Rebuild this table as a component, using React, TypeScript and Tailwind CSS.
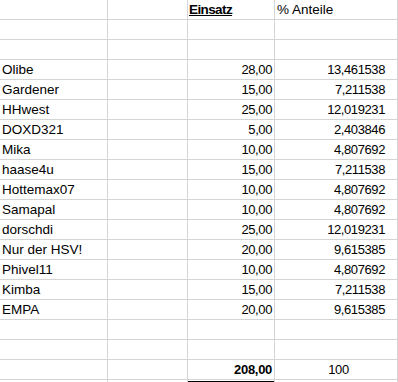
import React from 'react';

const data: [string, string, string][] = [
  ['Olibe', '28,00', '13,461538'],
  ['Gardener', '15,00', '7,211538'],
  ['HHwest', '25,00', '12,019231'],
  ['DOXD321', '5,00', '2,403846'],
  ['Mika', '10,00', '4,807692'],
  ['haase4u', '15,00', '7,211538'],
  ['Hottemax07', '10,00', '4,807692'],
  ['Samapal', '10,00', '4,807692'],
  ['dorschdi', '25,00', '12,019231'],
  ['Nur der HSV!', '20,00', '9,615385'],
  ['Phivel11', '10,00', '4,807692'],
  ['Kimba', '15,00', '7,211538'],
  ['EMPA', '20,00', '9,615385'],
];

const cell =
  'h-[20px] box-border border-r border-b border-[#d4d4d4] flex items-end pb-[1px] leading-[16px] overflow-hidden whitespace-nowrap';
const txt = 'text-[13.5px]';
const num = 'text-[13px] tracking-[-0.4px]';

function EmptyRow() {
  return (
    <>
      <div className={cell} />
      <div className={cell} />
      <div className={cell} />
      <div className={cell} />
    </>
  );
}

export default function App() {
  return (
    <div
      className="w-[398px] h-[382px] overflow-hidden bg-white text-black"
      style={{ fontFamily: '"Liberation Sans", Arial, sans-serif' }}
    >
      <div className="grid grid-cols-[108px_80px_87px_123px]">
        {/* header row */}
        <div className={cell} />
        <div className={cell} />
        <div className={`${cell} pl-[1px]`}>
          <span className={`${txt} font-bold underline underline-offset-[1px] tracking-[-0.6px]`}>Einsatz</span>
        </div>
        <div className={`${cell} pl-[2px]`}>
          <span className={txt}>% Anteile</span>
        </div>

        <EmptyRow />
        <EmptyRow />

        {data.map(([name, einsatz, anteil]) => (
          <React.Fragment key={name}>
            <div className={`${cell} pl-[2px]`}>
              <span className={txt}>{name}</span>
            </div>
            <div className={cell} />
            <div className={`${cell} justify-end pr-[2px]`}>
              <span className={num}>{einsatz}</span>
            </div>
            <div className={`${cell} justify-end pr-[12px]`}>
              <span className={num}>{anteil}</span>
            </div>
          </React.Fragment>
        ))}

        <EmptyRow />
        {/* row above total: black bottom border on column C */}
        <div className={cell} />
        <div className={cell} />
        <div className={`${cell} relative`}>
          <span className="absolute left-[-1px] right-[-1px] bottom-[-1px] h-px bg-black" />
        </div>
        <div className={cell} />

        {/* total row */}
        <div className={cell} />
        <div className={cell} />
        <div className={`${cell} justify-end pr-[2px] relative`}>
          <span className={`text-[13px] font-bold tracking-[-0.3px]`}>208,00</span>
          <span className="absolute left-[-1px] right-[-1px] bottom-[-1px] h-px bg-black" />
        </div>
        <div className={`${cell} justify-center pl-[5px]`}>
          <span className={num}>100</span>
        </div>

        {/* partial row */}
        <div className={cell} />
        <div className={cell} />
        <div className={`${cell} relative`}>
          <span className="absolute left-[-1px] right-[-1px] top-[1px] h-px bg-black" />
        </div>
        <div className={cell} />
      </div>
    </div>
  );
}
